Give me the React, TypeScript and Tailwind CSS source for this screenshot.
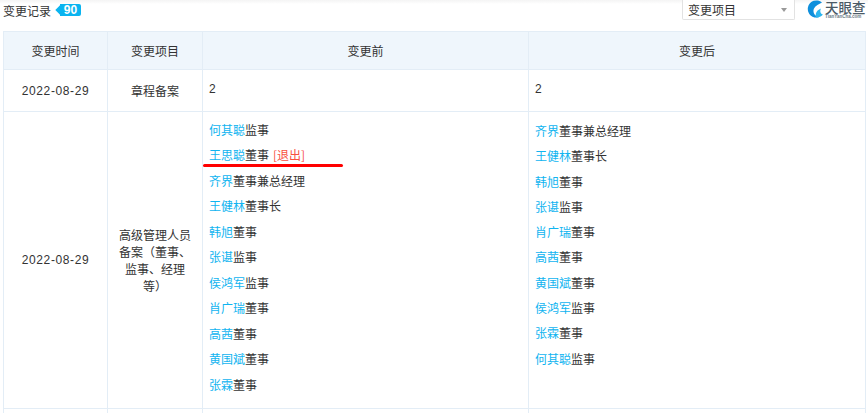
const before = [
  ["何其聪", "监事"],
  ["王思聪", "董事"],
  ["齐界", "董事兼总经理"],
  ["王健林", "董事长"],
  ["韩旭", "董事"],
  ["张谌", "监事"],
  ["侯鸿军", "监事"],
  ["肖广瑞", "董事"],
  ["高茜", "董事"],
  ["黄国斌", "董事"],
  ["张霖", "董事"],
];

const after = [
  ["齐界", "董事兼总经理"],
  ["王健林", "董事长"],
  ["韩旭", "董事"],
  ["张谌", "监事"],
  ["肖广瑞", "董事"],
  ["高茜", "董事"],
  ["黄国斌", "董事"],
  ["侯鸿军", "监事"],
  ["张霖", "董事"],
  ["何其聪", "监事"],
];

function People({ rows, withExit }: { rows: string[][]; withExit?: boolean }) {
  return (
    <div className="flex flex-col">
      {rows.map(([name, role]) => (
        <div key={name} className={`relative whitespace-nowrap ${withExit ? "h-[25.5px] leading-[25.5px]" : "h-[25.3px] leading-[25.3px]"}`}>
          <span className="text-[#10b4f0]">{name}</span>
          {role}
          {withExit && name === "王思聪" && <span className="ml-[4px] text-[#f8503f]">[退出]</span>}
          {withExit && name === "王思聪" && (
            <div className="absolute left-[-6px] top-[22px] h-[3px] w-[140px] rounded-full bg-[#ff0000]" />
          )}
        </div>
      ))}
    </div>
  );
}

export default function App() {
  return (
    <div className="h-[413px] w-[868px] overflow-hidden bg-white text-[12px] text-[#333] [font-family:'Noto_Sans_CJK_SC','Liberation_Sans',sans-serif]">
      <div className="flex h-[31px] items-start bg-gradient-to-b from-[#f4f4f4] to-white to-[4px] pl-[3px]">
        <span className="mt-[3px] text-[12px] leading-[16px]">变更记录</span>
        <span className="relative ml-[9px] mt-[4px] h-[12px] w-[21px] rounded-r-[2px] bg-[#0ab4f0] text-center text-[12px] font-bold leading-[12px] text-white [font-family:'Liberation_Sans',sans-serif]">
          <span className="absolute left-[-3px] top-[2px] h-[8px] w-[8px] rotate-45 bg-[#0ab4f0]" />
          <span className="relative">90</span>
        </span>
        <div className="ml-auto flex items-start">
          <div className="flex h-[20px] w-[113px] items-center justify-between rounded-b-[2px] border-x border-b border-[#e2e2e2] bg-white pl-[5px] pr-[7px] leading-[20px]">
            <span>变更项目</span>
            <span className="h-0 w-0 border-x-[3.5px] border-t-[4px] border-x-transparent border-t-[#999]" />
          </div>
          <div className="ml-[11px] flex h-[19px] w-[62px] items-start">
            <svg width="18" height="18" viewBox="0 0 18 18" className="shrink-0">
              <path d="M16 2.5A8.6 8.6 0 1 0 13 17.2C8 16 6.5 12 8 8.5 9.5 5.5 13 4 16 2.5Z" fill="#0f8fdc" />
              <path d="M10 17.5C9 13 11 10 15 8.5 13.5 11 14.5 14 17 14.5 15.5 16.5 13 17.5 10 17.5Z" fill="#2cb5ee" />
            </svg>
            <div className="ml-[1px] flex flex-col">
              <span className="text-[13.5px] font-medium leading-[14px] text-[#4b5a66]">天眼查</span>
              <span className="text-[4.5px] font-bold leading-[5px] text-[#6c7a86] [font-family:'Liberation_Sans',sans-serif]">TianYanCha.com</span>
            </div>
          </div>
        </div>
      </div>
      <div className="pl-[3px]">
        <table className="w-[862px] table-fixed border-collapse border border-[#e3edf6]">
          <colgroup>
            <col className="w-[104px]" />
            <col className="w-[95px]" />
            <col className="w-[326px]" />
            <col className="w-[337px]" />
          </colgroup>
          <thead>
            <tr className="h-[38px] bg-[#eff6fc] text-center">
              <th className="border border-[#e3edf6] font-normal">变更时间</th>
              <th className="border border-[#e3edf6] font-normal">变更项目</th>
              <th className="border border-[#e3edf6] font-normal">变更前</th>
              <th className="border border-[#e3edf6] font-normal">变更后</th>
            </tr>
          </thead>
          <tbody>
            <tr className="h-[42px]">
              <td className="border border-[#e3edf6] text-center tracking-[0.6px] [font-family:'Liberation_Sans','Noto_Sans_CJK_SC',sans-serif]">2022-08-29</td>
              <td className="border border-[#e3edf6] text-center">章程备案</td>
              <td className="border border-[#e3edf6] px-[6px] pb-[3px] [font-family:'Liberation_Sans',sans-serif]">2</td>
              <td className="border border-[#e3edf6] px-[6px] pb-[3px] [font-family:'Liberation_Sans',sans-serif]">2</td>
            </tr>
            <tr className="h-[297px]">
              <td className="border border-[#e3edf6] text-center tracking-[0.6px] [font-family:'Liberation_Sans','Noto_Sans_CJK_SC',sans-serif]">2022-08-29</td>
              <td className="border border-[#e3edf6] px-[9px] text-center leading-[17px]">高级管理人员备案（董事、监事、经理等）</td>
              <td className="border border-[#e3edf6] px-[6px] pb-[6px] align-middle">
                <People rows={before} withExit />
              </td>
              <td className="border border-[#e3edf6] px-[6px] pt-[6px] align-top">
                <People rows={after} />
              </td>
            </tr>
            <tr className="h-[12px]">
              <td className="border border-[#e3edf6]" />
              <td className="border border-[#e3edf6]" />
              <td className="border border-[#e3edf6]" />
              <td className="border border-[#e3edf6]" />
            </tr>
          </tbody>
        </table>
      </div>
    </div>
  );
}
